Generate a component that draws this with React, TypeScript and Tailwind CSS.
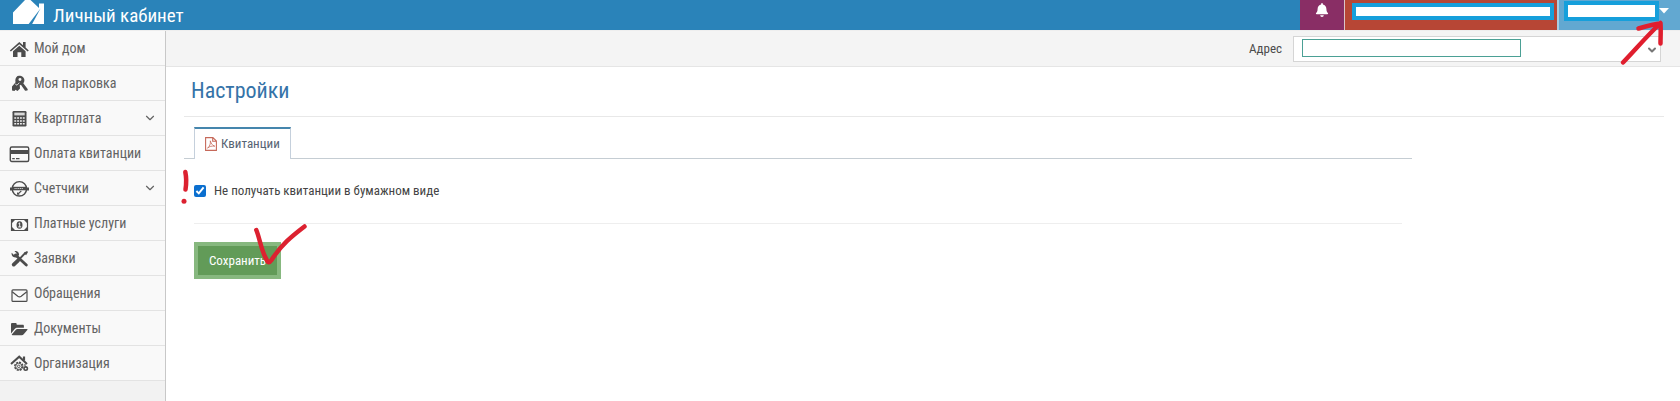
import type { ReactNode } from 'react';
import { FaBell } from 'react-icons/fa';
import { ChevronDown } from 'lucide-react';

type Item = { label: string; icon: ReactNode; expandable?: boolean };

const items: Item[] = [
  {
    label: 'Мой дом',
    icon: (
      <g fill="currentColor">
        <path d="M11.300 6 15 9.300V6h2.600v5.600l3.200 2.800-1.100 1.200-8.400-7.300-8.400 7.300-1.100-1.200z" />
        <path d="m11.300 9.700 6.300 5.500V21h-4.300v-4.800H9.500V21H5v-5.800z" />
      </g>
    ),
  },
  {
    label: 'Моя парковка',
    icon: (
      <g fill="currentColor">
        <path fillRule="evenodd" d="M11 4.800c3.300 0 5.400 1.900 5.400 4.500 0 1.300-.4 2.300-1.100 3l4.500 6-.4 1.300-2.300.1-4.200-5.900-.9.500c-2.800-.2-4.700-1.900-4.700-4.500 0-2.900 1.500-5 3.700-5zm.9 2.100a1.500 1.500 0 1 0 .1 3 1.500 1.500 0 0 0-.1-3z" />
        <path d="M8.300 10.500 4 15.500v4l2.500.5 1-1.300 2 1.300 2.500-2.500-.3-3.500z" />
        <path d="M7.200 13 9 14.200l2.300-2.500" fill="none" stroke="#f9f9f9" strokeWidth=".8" />
      </g>
    ),
  },
  {
    label: 'Квартплата',
    expandable: true,
    icon: (
      <g>
        <rect x="4.500" y="5" width="14" height="15.500" rx="1.200" fill="currentColor" />
        <rect x="6.300" y="6.600" width="10.400" height="2.800" fill="#d8d8d8" />
        <path d="M6.300 12h10.400M6.300 14.900h10.400M6.300 17.800h10.400" stroke="#eeeeee" strokeWidth="1.500" strokeDasharray="1.900 .93" />
      </g>
    ),
  },
  {
    label: 'Оплата квитанции',
    icon: (
      <g>
        <rect x="2.300" y="6" width="18.400" height="14.500" rx="1.500" fill="none" stroke="currentColor" strokeWidth="1.400" />
        <path d="M2 9h19v4H2z" fill="currentColor" />
        <path d="M4.200 17.700h2.600M8 17.700h3.500" stroke="currentColor" strokeWidth="1.300" />
      </g>
    ),
  },
  {
    label: 'Счетчики',
    expandable: true,
    icon: (
      <g>
        <circle cx="11.400" cy="12.800" r="7.200" fill="none" stroke="currentColor" strokeWidth="1.400" />
        <path d="M2 11.500h2v3H2zM18.800 11.500h2.200v3h-2.200z" fill="currentColor" />
        <path d="M4.500 10.800h13.800v3.500H4.500z" fill="currentColor" />
        <path d="M6.500 12.500h8.500" stroke="#c8c8c8" strokeWidth="1" strokeDasharray="1.200 .6" />
        <path d="m10 17.800 3.300-2.800M9.600 16.500v1.600h1.700" fill="none" stroke="currentColor" strokeWidth="1.100" />
      </g>
    ),
  },
  {
    label: 'Платные услуги',
    icon: (
      <g>
        <path d="M3.500 8.500h16v11h-16z" fill="none" stroke="currentColor" strokeWidth="1.200" />
        <path d="M4 9h3L4 12zM19 9v3l-3-3zM4 19v-3l3 3zM19 19h-3l3-3z" fill="currentColor" />
        <ellipse cx="11.500" cy="14" rx="3" ry="3.800" fill="currentColor" />
        <path d="m10.500 12.700 1.200-.8v4m-1.500 0h3" fill="none" stroke="#f9f9f9" strokeWidth="1" />
      </g>
    ),
  },
  {
    label: 'Заявки',
    icon: (
      <g fill="none" stroke="currentColor">
        <path d="m7.500 9 10.800 10" strokeWidth="2.800" strokeLinecap="round" />
        <path d="M3.700 6.800 6 9h2l.5-2L6.500 5.200c2.400-.8 4.800 1 4.500 3.700-1 2.500-3.800 3-5.500 2C4 10.200 3.300 8.500 3.700 6.800z" fill="currentColor" stroke="none" />
        <path d="m17.800 6.400-6.600 6.900" strokeWidth="1.900" />
        <path d="m15.700 6.900 3.300-1.800 1 1-1.900 3.200z" fill="currentColor" stroke="none" />
        <path d="m10.200 14.300-4.500 4.300" strokeWidth="3.800" strokeLinecap="round" />
      </g>
    ),
  },
  {
    label: 'Обращения',
    icon: (
      <g fill="none" stroke="currentColor" strokeWidth="1.200">
        <rect x="4" y="8.800" width="15" height="11.600" rx="1" />
        <path d="m4.200 10.800 5.600 4.400c1.200.9 2.200.9 3.400 0l5.600-4.400" />
      </g>
    ),
  },
  {
    label: 'Документы',
    icon: (
      <g fill="currentColor">
        <path d="M3 8.200C3 7.400 3.500 7 4.200 7h3.300c.7 0 1.200.5 1.200 1.200v.5h6c.8 0 1.200.5 1.200 1.200v1.900H9.500c-1.100 0-2.100.5-2.800 1.300L3 17.400z" />
        <path d="M9.600 13h9.200c.7 0 .9.400.5.900l-3.600 4.400c-.5.600-1.200.9-2 .9H4.500c-.7 0-.9-.4-.5-.9l3.600-4.400c.5-.6 1.200-.9 2-.9z" />
      </g>
    ),
  },
  {
    label: 'Организация',
    icon: (
      <g fill="none" stroke="currentColor">
        <path d="m3 13 8.200-7.300L19 13" strokeWidth="2" />
        <path d="M16 5.500v4" strokeWidth="2.200" />
        <circle cx="10.800" cy="15.300" r="4" strokeWidth="1.500" strokeDasharray="2.100 1" />
        <circle cx="10.800" cy="15.300" r="3.100" strokeWidth=".9" />
        <circle cx="10.800" cy="15.300" r="1.300" strokeWidth=".9" />
        <circle cx="17.700" cy="17.600" r="1.700" strokeWidth="1.600" />
        <path d="M17 13.300v1.500" strokeWidth="1.500" />
      </g>
    ),
  },
];

function PdfIcon() {
  return (
    <svg viewBox="0 0 12 14" className="h-[14px] w-3" fill="none" stroke="#c6695a" strokeWidth="1.100" aria-hidden="true">
      <path d="M.6.600h7.300l3.500 3.500v9.300H.600zM7.700.600v3.700h3.700" />
      <path d="M5.300 3.800c1 2.700 1.600 4.300 4.500 5.400-3-.4-5.300.1-7.300 2C4.700 9.300 5.800 6.800 5.300 3.800z" strokeWidth=".8" />
    </svg>
  );
}

function Header() {
  return (
    <header className="flex h-[30px] justify-between bg-[#2a83b9]">
      <a href="#" className="flex items-start pl-3 text-white">
        <svg viewBox="0 0 33 30" className="h-[30px] w-[33px]" fill="currentColor" aria-hidden="true">
          <path d="M1 24V12.500L13 0h5.500L27 8V3.500h5V24z" />
          <path d="M16.500 24.200 28.500 8.500 20 24.200z" fill="#2a83b9" />
        </svg>
        <span className="pl-2 text-[19px] leading-8">Личный кабинет</span>
      </a>
      <nav className="flex" aria-label="Профиль">
        <button type="button" aria-label="Уведомления" className="flex w-11 justify-center bg-[#892e65] pt-[3px] text-white">
          <FaBell className="h-[14px] w-[14px]" />
        </button>
        <a href="#" aria-label="Лицевой счёт" className="block w-[213px] border-l border-[#dcc5c8] bg-[#b74635] pt-[3px] pl-[7px]">
          <span className="block h-[17px] w-[202px] border-4 border-[#169fdb] bg-white" />
        </a>
        <button type="button" aria-label="Меню пользователя" className="flex w-[123px] items-start border-l-2 border-[#a9cde2] bg-[#62a8d1] pt-px pl-[5px]">
          <span className="block h-[20px] w-[95px] border-4 border-[#169fdb] bg-white" />
          <svg viewBox="0 0 10 6" className="mt-[7px] h-[6px] w-[10px]" fill="white" aria-hidden="true">
            <path d="M0 0h10L5 5.500z" />
          </svg>
        </button>
      </nav>
    </header>
  );
}

function Sidebar() {
  return (
    <aside className="w-[166px] shrink-0 border-r border-[#c8c8c8] bg-[#f2f2f2]">
      <ul>
        {items.map((item) => (
          <li key={item.label} className="h-[35px] border-b border-[#e3e3e3] bg-[#f9f9f9]">
            <a href="#" className="flex h-full items-center pr-2 pl-2 text-sm text-[#636363]">
              <svg viewBox="0 0 24 24" className="h-6 w-6 text-[#4c4c4c]" aria-hidden="true">
                {item.icon}
              </svg>
              <span className="flex-1 pl-[2px] whitespace-nowrap">{item.label}</span>
              {item.expandable && <ChevronDown size={14} strokeWidth={2} />}
            </a>
          </li>
        ))}
      </ul>
    </aside>
  );
}

function AddressBar() {
  return (
    <div className="flex h-9 items-center justify-end border-b border-[#e5e5e5] bg-[#f4f4f4] pr-[19px]">
      <label htmlFor="address" className="pr-[11px] text-[13px] text-[#4c4c4c]">
        Адрес
      </label>
      <div className="relative">
        <select id="address" className="block h-[26px] w-[368px] appearance-none border border-[#d5d5d5] bg-white">
          <option value="" />
        </select>
        <span className="pointer-events-none absolute top-[3px] left-[9px] h-[18px] w-[219px] border border-[#4ba095] bg-white" />
        <ChevronDown size={12} strokeWidth={4} className="pointer-events-none absolute top-2 right-[3px] text-[#777777]" />
      </div>
    </div>
  );
}

function Annotations() {
  return (
    <>
      <svg viewBox="0 0 10 38" className="pointer-events-none absolute top-[168px] left-[180px] h-[38px] w-[10px]" fill="none" stroke="#dc2130" strokeLinecap="round" aria-hidden="true">
        <path d="M5.300 4Q7 12 5.500 21.500" strokeWidth="4.500" />
        <path d="M4 33.200v.1" strokeWidth="5" />
      </svg>
      <svg viewBox="0 0 60 46" className="pointer-events-none absolute top-[221px] left-[250px] h-[46px] w-[60px]" fill="none" stroke="#dc2130" strokeWidth="4.500" strokeLinecap="round" strokeLinejoin="round" aria-hidden="true">
        <path d="M6.300 9C10 18 11 29 16.500 38.500C17.500 42 19.500 42 21.500 39C31 24 42 15 54.500 5.500" />
      </svg>
      <svg viewBox="0 0 48 48" className="pointer-events-none absolute top-[18px] right-[15px] h-12 w-12" fill="none" stroke="#e01e2e" strokeWidth="4.500" strokeLinecap="round" strokeLinejoin="round" aria-hidden="true">
        <path d="M6 44.500C18 32 29 19 43.500 5M21.500 10.500C30 8 37 6 43.500 5.500C44 12 43.500 19 43.500 25.500" />
      </svg>
    </>
  );
}

export default function App() {
  return (
    <div className="relative flex min-h-screen flex-col overflow-hidden bg-white font-['Roboto_Condensed','Roboto','Noto_Sans',sans-serif]">
      <Header />
      <div className="flex flex-1 border-t border-[#eeeeee]">
        <Sidebar />
        <main className="min-w-0 flex-1">
          <AddressBar />
          <div className="pr-4 pl-[18px]">
            <h1 className="border-b border-[#e8e8e8] pt-[9px] pb-[10px] pl-[7px] text-[22px] leading-[30px] text-[#3573a8]">Настройки</h1>
            <div className="mr-[252px]">
              <div role="tablist" className="mt-[10px] flex border-b border-[#c5cdd3] pl-[10px]">
                <button
                  type="button"
                  role="tab"
                  aria-selected="true"
                  className="-mb-px flex h-8 items-center gap-1 border-x border-t-2 border-x-[#c5d0dc] border-t-[#4586ad] bg-white px-[10px] text-[13px] text-[#576373]"
                >
                  <PdfIcon />
                  Квитанции
                </button>
              </div>
              <form className="mr-[10px] ml-[10px]" onSubmit={(e) => e.preventDefault()}>
                <div className="flex h-[65px] items-center border-b border-[#eeeeee]">
                  <label className="flex items-center gap-2 text-[13px] text-[#444444]">
                    <input type="checkbox" defaultChecked className="h-3 w-3 accent-[#0b6fcf]" />
                    Не получать квитанции в бумажном виде
                  </label>
                </div>
                <button type="submit" className="mt-[18px] h-[37px] border-4 border-[#87b87f] bg-[#629b58] px-[11px] text-[13px] text-white">
                  Сохранить
                </button>
              </form>
            </div>
          </div>
        </main>
      </div>
      <Annotations />
    </div>
  );
}
